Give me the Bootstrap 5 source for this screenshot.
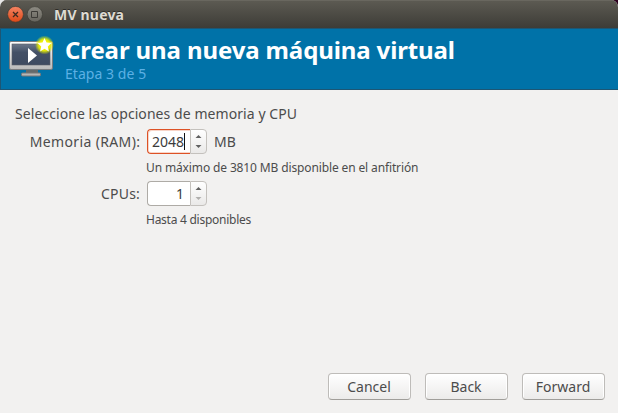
<!DOCTYPE html>
<html lang="es">
<head>
<meta charset="utf-8">
<meta name="viewport" content="width=device-width, initial-scale=1">
<title>MV nueva</title>
<link href="https://cdn.jsdelivr.net/npm/bootstrap@5.3.0/dist/css/bootstrap.min.css" rel="stylesheet">
<style>
html{background:#2c001e}
body{height:413px;overflow:hidden;font:14px/20px "Noto Sans","Open Sans",sans-serif;color:#4c4c4c;background:linear-gradient(90deg,#e8e8e8 50%,#2c001e 50%)}
.window{height:413px;background:#f2f1f0;border-radius:7px 7px 0 0;overflow:hidden;white-space:nowrap}
.titlebar{height:28px;padding-left:7px;background:linear-gradient(#5d5b53,#3d3c37);box-shadow:inset 0 1px #69675f;color:#dfdbd2}
.titlebar svg{display:block;margin-right:3px}
.t-window{font-size:14px;font-weight:700;margin:2px 0 0 7px;letter-spacing:.2px;text-shadow:0 -1px #2e2d29}
.banner{height:62px;background:#0072a8;border:1px solid #1d5674;border-right:0;padding-left:7px}
.banner svg{display:block;margin-right:10px}
.t-title{font-size:24px;line-height:28px;font-weight:700;color:#fff;margin:0;letter-spacing:-.12px}
.t-step{font-size:14px;line-height:18px;color:#5cb0e4;padding-top:1px;letter-spacing:.05px}
.content-area{padding:14px 15px 0}
.t-intro{letter-spacing:.07px}
.t-mem{letter-spacing:.36px;margin-right:-.36px}
.t-cpu{letter-spacing:.2px}
.t-mb{margin-left:7px}
.form-rows{display:grid;grid-template-columns:125px 1fr;column-gap:7px;grid-template-rows:25px 27px 25px 27px;margin-top:5px;align-items:center}
.spin{width:60px;height:25px}
.spin-value{width:43px;height:25px;line-height:23px;font-size:14px;color:#3c3c3c;background:#fff;border:1px solid #aeaba6;border-right:0;border-radius:4px 0 0 4px;padding-right:6px}
.spin-focus .spin-value{border-color:#dd5226;padding-right:5px;box-shadow:inset 1px 1px #f8d5c8,inset 0 -1px #f8d5c8}
.caret-line{width:1px;height:17px;background:#111}
.steps{width:17px;height:25px;background:linear-gradient(#fff,#eae9e8);border:1px solid #c4c1bd;border-radius:0 4px 4px 0}
.hint{font-size:12px;margin-left:-1px}
.t-max{letter-spacing:-.13px}
.t-avail{letter-spacing:-.26px}
.dialog-actions{padding:0 13px 13px;gap:14px}
.dialog-btn{width:83px;height:27px;padding:0 1px 0 0;border:1px solid #bebcb9;border-bottom-color:#a09e9a;border-radius:4px;background:linear-gradient(#fff,#ecebea);font-size:14px;line-height:24px;color:#4c4c4c;box-shadow:inset 1px 1px #fff,inset -1px 0 #fff}
</style>
<script src="https://cdn.jsdelivr.net/npm/bootstrap@5.3.0/dist/js/bootstrap.bundle.min.js"></script>
</head>
<body>
<main class="window d-flex flex-column">
  <header class="titlebar d-flex align-items-center">
    <svg width="17" height="18" viewBox="0 0 17 18"><defs><linearGradient id="closeFill" x2="0" y2="1"><stop stop-color="#f58564"/><stop offset="1" stop-color="#dd4816"/></linearGradient><linearGradient id="maxFill" x2="0" y2="1"><stop stop-color="#8d8b83"/><stop offset="1" stop-color="#66645d"/></linearGradient></defs><circle cx="8.5" cy="9.3" r="7.900" fill="url(#closeFill)" stroke="#383731" stroke-width=".6"/><path d="M6 7l5 5M11 7l-5 5" stroke="#3c2a20" stroke-width="1.300"/></svg>
    <svg width="17" height="18" viewBox="0 0 17 18"><circle cx="7.800" cy="9.300" r="7.700" fill="url(#maxFill)" stroke="#383731" stroke-width=".6"/><path d="M4.500 6.500h6v6h-6z" fill="none" stroke="#3c3b37"/></svg>
    <span class="t-window">MV nueva</span>
  </header>
  <section class="banner d-flex align-items-center">
    <svg width="47" height="46" viewBox="0 0 47 46"><defs><linearGradient id="frame" x2="0" y2="1"><stop stop-color="#fff"/><stop offset="1" stop-color="#b9b9b9"/></linearGradient><linearGradient id="screen" x2="0" y2="1"><stop stop-color="#6b7789"/><stop offset=".4" stop-color="#435066"/><stop offset="1" stop-color="#3e4a60"/></linearGradient><radialGradient id="glow"><stop stop-color="#ffff20"/><stop offset=".6" stop-color="#eef000" stop-opacity=".95"/><stop offset="1" stop-color="#e0ef00" stop-opacity="0"/></radialGradient></defs>
      <path d="M18 34h12v4h-12z" fill="#646a6c"/><rect x="13.500" y="37" width="19" height="3" rx="1" fill="#b6b6b6" stroke="#777"/><rect x="1.500" y="5.500" width="43" height="28" rx="1.500" fill="url(#frame)" stroke="#777c80"/><rect x="4" y="8" width="38" height="21" fill="url(#screen)" stroke="#5b6068" stroke-width=".6"/><path d="M20 12v15l9-7.500z" fill="#fff"/><circle cx="36.500" cy="9" r="9.500" fill="url(#glow)"/><path d="M36.500 2l2 4.500 5 .5-3.700 3.400 1.100 5-4.400-2.600-4.400 2.600 1.100-5L29.500 7l5-.5z" fill="#fff"/></svg>
    <div><h1 class="t-title">Crear una nueva máquina virtual</h1><div class="t-step">Etapa 3 de 5</div></div>
  </section>
  <section class="content-area flex-grow-1">
    <div><span class="t-intro">Seleccione las opciones de memoria y CPU</span></div>
    <div class="form-rows">
      <div class="text-end"><span class="t-mem">Memoria (RAM):</span></div>
      <div class="d-flex align-items-center">
        <div class="spin spin-focus d-flex"><span class="spin-value d-flex justify-content-end align-items-center">2048<i class="caret-line"></i></span><span class="steps"><svg class="d-block" width="15" height="23" viewBox="0 0 15 23"><path d="M4.500 8L7.500 5l3 3z" fill="#606060"/><path d="M4.500 15L7.500 18l3-3z" fill="#606060"/></svg></span></div>
        <span class="t-mb">MB</span>
      </div>
      <span></span><div class="hint"><span class="t-max">Un máximo de 3810 MB disponible en el anfitrión</span></div>
      <div class="text-end"><span class="t-cpu">CPUs:</span></div>
      <div class="spin d-flex"><span class="spin-value text-end">1</span><span class="steps"><svg class="d-block" width="15" height="23" viewBox="0 0 15 23"><path d="M4.500 8L7.500 5l3 3z" fill="#606060"/><path d="M4.500 15L7.500 18l3-3z" fill="#b0afad"/></svg></span></div>
      <span></span><div class="hint"><span class="t-avail">Hasta 4 disponibles</span></div>
    </div>
  </section>
  <footer class="dialog-actions d-flex justify-content-end">
    <button class="btn dialog-btn">Cancel</button><button class="btn dialog-btn">Back</button><button class="btn dialog-btn">Forward</button>
  </footer>
</main>
</body>
</html>
